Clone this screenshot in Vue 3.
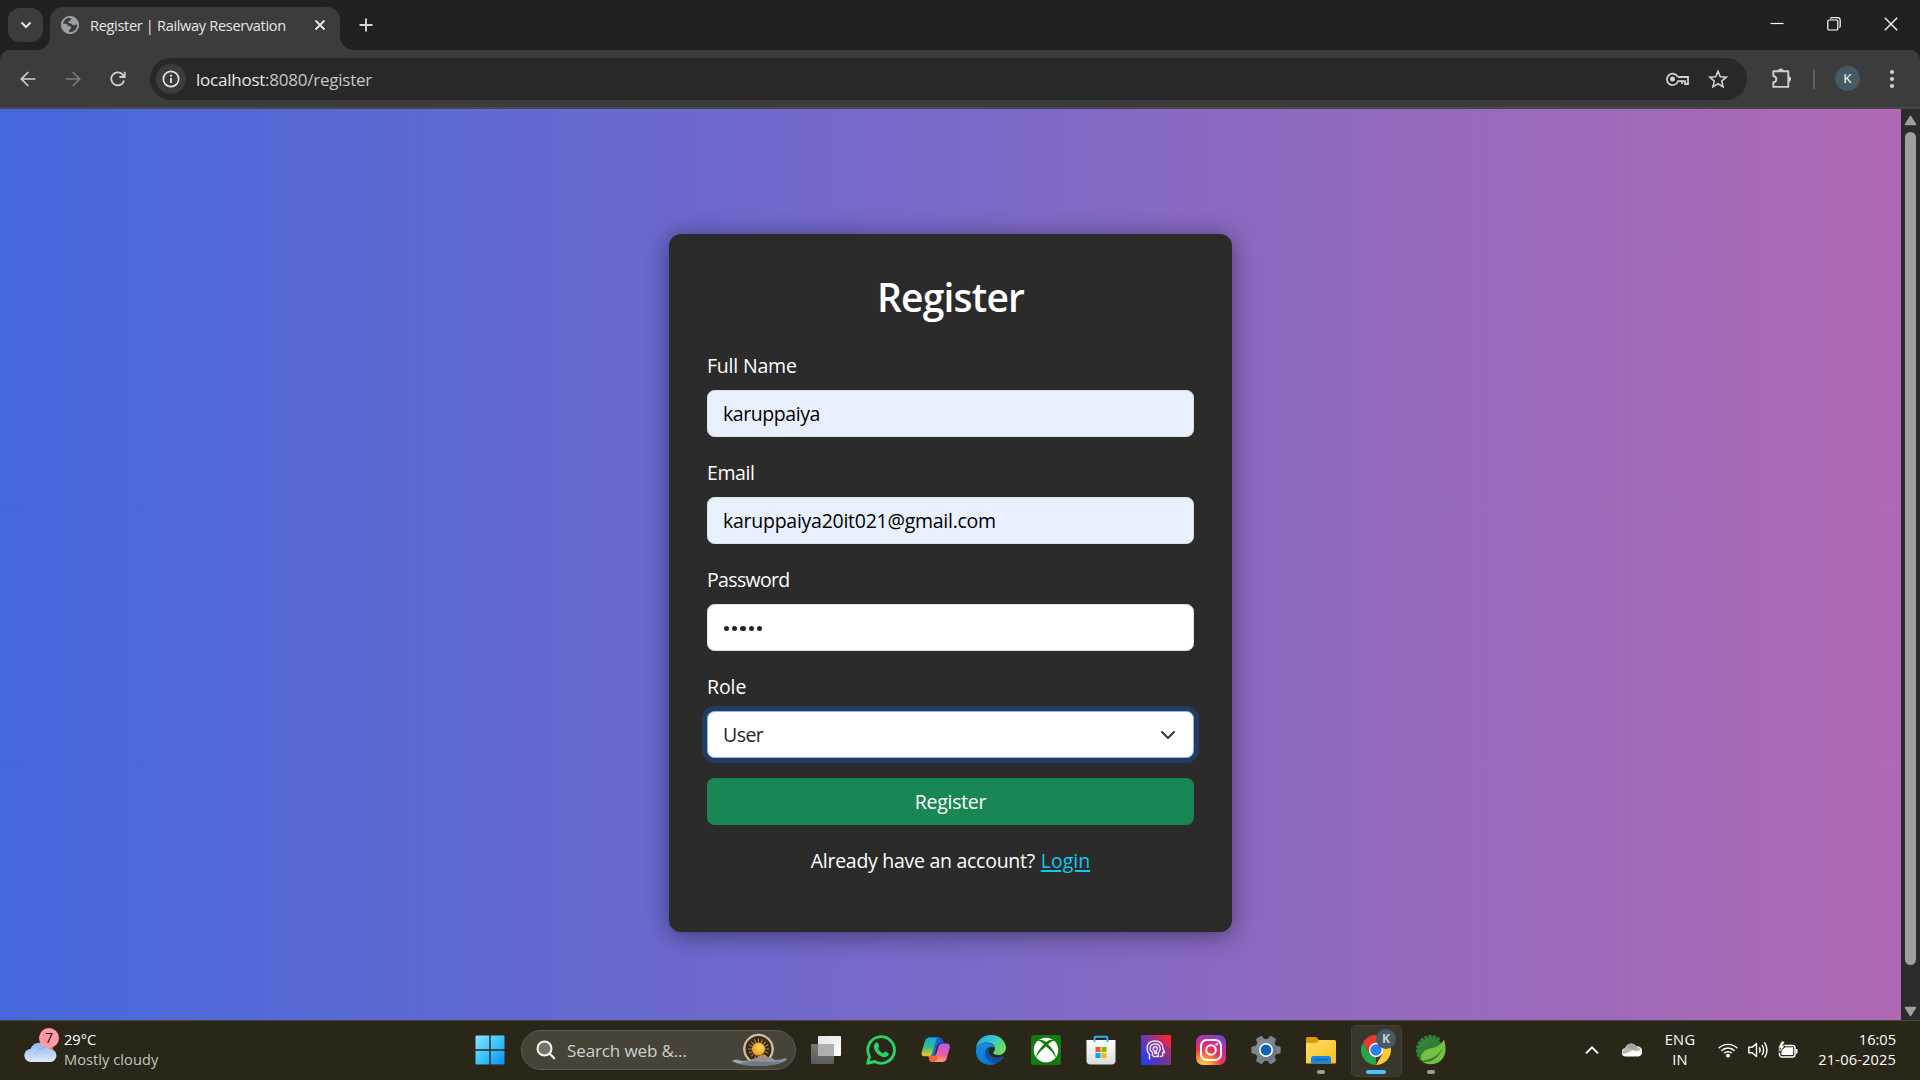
<script setup>
import { ref } from 'vue'

const name = ref('karuppaiya')
const email = ref('karuppaiya20it021@gmail.com')
const gearTeeth = [0, 60, 120, 180, 240, 300]
const leafTeeth = [150, 168, 186, 204, 222, 240, 258, 276, 294, 312]
const sunRays = Array.from({ length: 16 }, (_, i) => i * 22.5)
</script>

<template>
  <div class="screen">
    <header class="tabstrip">
      <button class="tab-search">
        <svg width="12" height="12" viewBox="0 0 12 12"><path d="M1.5 3.500 6 8l4.500-4.500" fill="none" stroke="#e3e3e3" stroke-width="2" /></svg>
      </button>
      <div class="tab">
        <svg class="globe" width="18" height="18" viewBox="0 0 18 18">
          <circle cx="9" cy="9" r="9" fill="#9aa0a6" />
          <path d="M2 7.500C2.500 4.500 5 2 8.500 1.800c1.500.2 2 1 1.500 2C9.500 5 8 4.500 7.500 5.800c-.4 1.200.8 1.700 2.200 1.600 1.500 0 1.500 1.600 2.800 1.800 1.500.2 2.500-.7 3.700-.7.300 3.500-2.200 7.200-6.400 7.800-1.600 0-2.300-.8-1.800-2 .5-1.200 2-1 2.200-2.500.1-1.500-1.300-1.500-2.500-1.900C6 9.400 6.500 7.700 4.800 7.700z" fill="#3c3c3c" />
          <circle cx="9" cy="9" r="8.200" fill="none" stroke="#9aa0a6" stroke-width="1.600" />
        </svg>
        <span class="tab-title">Register | Railway Reservation</span>
        <svg class="tab-close" width="12" height="12" viewBox="0 0 12 12"><path d="m1.500 1.500 9 9m0-9-9 9" stroke="#e8e8e8" stroke-width="1.900" /></svg>
      </div>
      <svg class="new-tab" width="14" height="14" viewBox="0 0 14 14"><path d="M7 .5v13M.5 7h13" stroke="#d5d5d5" stroke-width="1.900" /></svg>
      <div class="window-controls">
        <svg width="14" height="14" viewBox="0 0 14 14"><path d="M.5 6.500h13" stroke="#fff" stroke-width="1.200" /></svg>
        <svg width="14" height="14" viewBox="0 0 14 14"><g fill="none" stroke="#fff" stroke-width="1.200"><rect x=".8" y="3" width="10" height="10" rx="1.300" /><path d="M3.300 1.500Q3.800.7 5 .7h5.500q2.700 0 2.700 2.700V9q0 1-.8 1.500" /></g></svg>
        <svg width="14" height="14" viewBox="0 0 14 14"><path d="m.8.8 12.400 12.400m0-12.400L.8 13.200" stroke="#fff" stroke-width="1.300" /></svg>
      </div>
    </header>

    <div class="toolbar">
      <div class="nav">
        <svg width="16" height="16" viewBox="0 0 16 16"><path d="M15.500 8H1.500M8.300 1 1.300 8l7 7" fill="none" stroke="#d0d0d0" stroke-width="1.700" /></svg>
        <svg width="16" height="16" viewBox="0 0 16 16"><path d="M.5 8h14M7.700 1l7 7-7 7" fill="none" stroke="#7b7b7b" stroke-width="1.700" /></svg>
        <svg width="16" height="16" viewBox="0 0 16 16"><path d="M14 9.500A6.500 6.500 0 1 1 13.300 4.500L14.500 6M14.700.7V6H9.400" fill="none" stroke="#d0d0d0" stroke-width="1.800" /></svg>
      </div>
      <div class="omnibox">
        <span class="info">
          <svg width="18" height="18" viewBox="0 0 18 18"><circle cx="9" cy="9" r="7.700" fill="none" stroke="#e3e3e3" stroke-width="1.700" /><path d="M9 8v5M9 4.800v1.900" stroke="#e3e3e3" stroke-width="1.800" /></svg>
        </span>
        <span class="url"><b>localhost</b>:8080/register</span>
        <svg class="key" width="24" height="14" viewBox="0 0 24 14"><g fill="none" stroke="#d0d0d0" stroke-width="1.800"><path d="M12 5h10v7h-3V9.200h-3V12" /><path d="M11.800 5A5.700 5.700 0 1 0 12 9.200h4" /></g><circle cx="6.500" cy="7" r="2.500" fill="#d0d0d0" /></svg>
        <svg class="star" width="20" height="20" viewBox="0 0 20 20"><path d="m10 2.200 2.300 5.500 5.900.5-4.500 3.900 1.400 5.800-5.100-3.100-5.100 3.100 1.400-5.800-4.500-3.900 5.900-.5z" fill="none" stroke="#d0d0d0" stroke-width="1.600" /></svg>
      </div>
      <svg class="puzzle" width="22" height="22" viewBox="0 0 22 22"><path d="M2.300 3.300h15v15.600h-15v-4.400q3-.7 3-3.300t-3-3.200z" fill="none" stroke="#d0d0d0" stroke-width="1.900" stroke-linejoin="round" /><path d="M7 3.300a2.800 2.800 0 0 1 5.600 0zM17.300 8.300a2.800 2.800 0 0 1 0 5.600z" fill="#d0d0d0" /></svg>
      <i class="divider"></i>
      <span class="avatar">K</span>
      <svg class="dots" width="6" height="20" viewBox="0 0 6 20"><g fill="#d0d0d0"><circle cx="3" cy="3" r="2.100" /><circle cx="3" cy="10" r="2.100" /><circle cx="3" cy="17" r="2.100" /></g></svg>
    </div>

    <div class="viewport">
      <main class="page">
        <form class="card" @submit.prevent>
          <h2>Register</h2>
          <label class="l-name">Full Name</label>
          <div class="field filled f-name">{{ name }}</div>
          <label class="l-email">Email</label>
          <div class="field filled f-email">{{ email }}</div>
          <label class="l-pass">Password</label>
          <div class="field f-pass"><i v-for="n in 5" :key="n"></i></div>
          <label class="l-role">Role</label>
          <div class="field focus f-role">
            <span>User</span>
            <svg width="16" height="16" viewBox="0 0 16 16"><path d="m2 5 6 6 6-6" fill="none" stroke="#343a40" stroke-width="2" stroke-linecap="round" stroke-linejoin="round" /></svg>
          </div>
          <button class="submit">Register</button>
          <p class="hint"><span>Already have an account?</span><a>Login</a></p>
        </form>
      </main>
      <aside class="scrollbar">
        <svg width="13" height="11" viewBox="0 0 13 11"><path d="M6.500 1.500 11.500 9.500h-10z" fill="#9f9f9f" stroke="#9f9f9f" stroke-width="1.500" stroke-linejoin="round" /></svg>
        <i class="thumb"></i>
        <svg width="13" height="11" viewBox="0 0 13 11"><path d="M6.500 9.500 11.500 1.500h-10z" fill="#9f9f9f" stroke="#9f9f9f" stroke-width="1.500" stroke-linejoin="round" /></svg>
      </aside>
    </div>

    <footer class="taskbar">
      <div class="weather">
        <svg width="36" height="40" viewBox="0 0 36 40">
          <defs><linearGradient id="cl" x1="0" y1="0" x2="0" y2="1"><stop offset="0" stop-color="#8fb5f2" /><stop offset="1" stop-color="#dde9fb" /></linearGradient></defs>
          <path d="M20 18h9v8h-9z" fill="#f5780a" />
          <path d="M7 36a6.500 6.500 0 0 1-.5-13 9 9 0 0 1 15-3.500 6 6 0 0 1 5 3.500 6.500 6.500 0 0 1-1 13z" fill="url(#cl)" />
          <path d="M11 29q1-6 7-7 4-3 8 1" fill="none" stroke="#7fa6e8" stroke-width="1" opacity=".6" />
        </svg>
        <span class="badge">7</span>
        <div class="weather-text"><span class="temp">29°C</span><span class="sky">Mostly cloudy</span></div>
      </div>

      <div class="start">
        <svg width="30" height="30" viewBox="0 0 30 30">
          <defs><linearGradient id="win" x1="0" y1="0" x2="1" y2="1"><stop offset="0" stop-color="#8fe3ff" /><stop offset=".5" stop-color="#3cc4fb" /><stop offset="1" stop-color="#0a8ff8" /></linearGradient></defs>
          <path d="M.5 1.500A1 1 0 0 1 1.500.5h12.800v13.800H.5zM15.700.5h12.800a1 1 0 0 1 1 1v12.800H15.700zM.5 15.700h13.800v13.800H1.500a1 1 0 0 1-1-1zM15.700 15.700h13.800v12.800a1 1 0 0 1-1 1H15.700z" fill="url(#win)" />
        </svg>
      </div>

      <div class="search">
        <svg width="20" height="20" viewBox="0 0 20 20"><circle cx="8.500" cy="8.500" r="7" fill="#77756b" stroke="#f5f5f5" stroke-width="2" /><path d="m13.500 13.500 4.700 4.700" stroke="#f5f5f5" stroke-width="2.300" stroke-linecap="round" /></svg>
        <span>Search web &amp;...</span>
        <svg class="sunrise" width="56" height="34" viewBox="0 0 56 34">
          <defs>
            <radialGradient id="sun" cx=".6" cy=".4"><stop offset="0" stop-color="#ffe27a" /><stop offset="1" stop-color="#f6a31c" /></radialGradient>
            <linearGradient id="hill" x1="0" x2="1"><stop offset="0" stop-color="#8faec0" /><stop offset=".5" stop-color="#a08f80" /><stop offset="1" stop-color="#7597b0" /></linearGradient>
          </defs>
          <circle cx="27.500" cy="16" r="14" fill="#352b20" stroke="#e9b888" stroke-width="2" />
          <circle cx="27.500" cy="16" r="15" fill="none" stroke="#abcbe0" stroke-width=".8" />
          <path v-for="a in sunRays" :key="a" d="M27.500 5.500v4" stroke="#b98528" stroke-width="1" :transform="`rotate(${a} 27.500 16)`" />
          <circle cx="27.500" cy="16" r="6.500" fill="url(#sun)" />
          <path d="M1 28q4-3 10 0 6 0 11-2 4-1 8-4 4-1 7 2 4 0 7 3 6 0 11-2 2 2-3 4-8 4-24 4-19 0-27-5z" fill="url(#hill)" />
          <path d="M8 31q12-5 24-2 10 1 18-1-6 5-23 5-12 0-19-2z" fill="#577087" opacity=".7" />
        </svg>
      </div>

      <nav class="apps">
        <span class="app"><svg viewBox="0 0 30 30">
          <defs><linearGradient id="tv1" x1="0" y1="0" x2="1" y2="1"><stop offset="0" stop-color="#e4e4e4" /><stop offset="1" stop-color="#fff" /></linearGradient><linearGradient id="tv2" x1="0" y1="0" x2="0" y2="1"><stop offset="0" stop-color="#777" /><stop offset="1" stop-color="#5c5c5c" /></linearGradient></defs>
          <rect x="0" y="9" width="23" height="20" rx="1" fill="url(#tv2)" /><rect x="7" y="1" width="23" height="20" rx="1" fill="url(#tv1)" /><path d="M7 9h16v12H8a1 1 0 0 1-1-1z" fill="#afafaf" />
        </svg></span>
        <span class="app"><svg viewBox="0 0 30 30">
          <path d="M1.700 28.300 3.500 21.400A13.300 13.300 0 1 1 8.500 26.500z" fill="none" stroke="#25d366" stroke-width="2.900" stroke-linejoin="round" />
          <path d="M9.700 7.700c.8-.6 1.900-.5 2.300.3l1.200 2.900c.3.700-1.200 1.900-1.300 2.400.9 2.200 2.900 4.100 5.300 5 .7-.1 1.500-2 2.300-1.800l2.800 1.400c.8.4.3 2.300-.6 3.200-1.300 1.200-3.300 1.400-5 .8-4.400-1.500-7.300-4.600-8.500-8.200-.7-2.200-.2-4.700 1.500-6z" fill="#25d366" />
        </svg></span>
        <span class="app"><svg viewBox="0 0 30 30">
          <defs>
            <linearGradient id="cp1" x1="0" y1="0" x2="0" y2="1"><stop offset="0" stop-color="#12a7ee" /><stop offset=".5" stop-color="#39bd83" /><stop offset="1" stop-color="#f4c81c" /></linearGradient>
            <linearGradient id="cp2" x1=".4" y1="0" x2=".3" y2="1"><stop offset="0" stop-color="#b15cf0" /><stop offset=".55" stop-color="#ed5c9b" /><stop offset="1" stop-color="#ffa06b" /></linearGradient>
            <linearGradient id="cp3" x1="0" y1="0" x2="1" y2="0"><stop offset="0" stop-color="#1c7ee8" /><stop offset="1" stop-color="#1e46c4" /></linearGradient>
          </defs>
          <path d="M7 2.500h12q2 0 2.800 2.500l1.200 3.500h-4q-2.200 0-3.100 3l-2.700 10q-.8 2-3.200 2z" fill="url(#cp3)" />
          <path d="M22.500 8.500h2.800q4.500 0 3.400 4.500l-3 10.500Q24.600 27 21 27H11.500q-2.500 0-3.200-2.500L7.700 21.300H12q2.500 0 3.200-2.500l2.300-7.600q.9-2.700 5-2.700z" fill="url(#cp2)" />
          <path d="M7.500 21.300H12q2.500 0 3-2l1.500 5-2.500 2.700h-2.500q-2.500 0-3.200-2.500z" fill="#f4622e" />
          <path d="M8.500 2.500h9q-1.900.8-2.700 3.500l-4 13.300q-.7 2-2.800 2H4q-4.400 0-3.200-4.600L4 6q1-3.500 4.500-3.500z" fill="url(#cp1)" />
        </svg></span>
        <span class="app"><svg viewBox="0 0 30 30">
          <defs>
            <linearGradient id="ed1" x1="0" y1=".2" x2="1" y2=".6"><stop offset="0" stop-color="#27a6e8" /><stop offset=".5" stop-color="#36c6cf" /><stop offset="1" stop-color="#72e04c" /></linearGradient>
            <linearGradient id="ed2" x1="0" y1="0" x2=".3" y2="1"><stop offset="0" stop-color="#1590dc" /><stop offset="1" stop-color="#0a76d6" /></linearGradient>
          </defs>
          <path d="M0 14C.5 6 6.500 0 15 0c9 0 15 6.500 15 12.500 0 4.500-3.300 7.500-7.500 7.500-3.500 0-5.700-1.200-5.200-2.500.4-1 1.700-1.500 1.700-3.800C19 9.500 14.500 7.500 10 7.500 5 7.500 1.500 10.500 0 14z" fill="url(#ed1)" />
          <path d="M0 15.500C.5 10.500 4.500 8 9.500 8c4.300 0 8.800 1.600 9.400 5-3.700-3-8.100.4-7.600 5.500.7 6 5.500 9.500 10 9-2 1.600-4.200 2.500-6.800 2.500C6 30-.7 23.500 0 15.500z" fill="url(#ed2)" />
          <path d="M14.500 11.700c-3.700.2-5.900 3.300-5.300 7.300C10 25 15 29 20.500 28c3.200-1 5.800-3 7.200-5.600.5-1-.4-1.200-1.200-.8-4.400 2-9.700 1.200-12.300-1.900-2.500-2.800-1.900-6 .3-8z" fill="#144f9e" />
        </svg></span>
        <span class="app"><svg viewBox="0 0 30 30">
          <rect width="30" height="30" rx="3" fill="#107c10" /><circle cx="15" cy="15" r="12.300" fill="#fff" />
          <path d="M6.500 5.500Q10 3.500 15 7q5-3.500 8.500-1.500-3 .3-6.500 3.700 6.500 6 8.500 14-4-7-10.500-12-6.500 5-10.500 12 2-8 8.500-14-3.500-3.400-6.500-3.700z" fill="#107c10" />
        </svg></span>
        <span class="app"><svg viewBox="0 0 30 30">
          <defs><linearGradient id="st" x1="0" y1="0" x2="0" y2="1"><stop offset="0" stop-color="#fff" /><stop offset="1" stop-color="#dcdcdc" /></linearGradient></defs>
          <path d="M.5 5h29v20.500a4 4 0 0 1-4 4h-21a4 4 0 0 1-4-4z" fill="url(#st)" />
          <path d="M8.500 7V3q0-1.200 1.200-1.200h10.600q1.200 0 1.200 1.200v4" fill="none" stroke="#28b4ee" stroke-width="1.900" />
          <path d="M9.500 12h5v5h-5z" fill="#f25022" /><path d="M15.500 12h5v5h-5z" fill="#7fba00" /><path d="M9.500 18h5v5h-5z" fill="#00a4ef" /><path d="M15.500 18h5v5h-5z" fill="#ffb900" />
        </svg></span>
        <span class="app"><svg viewBox="0 0 30 30">
          <defs><linearGradient id="hd" x1="0" y1=".9" x2="1" y2=".2"><stop offset="0" stop-color="#1740f5" /><stop offset=".5" stop-color="#7638a8" /><stop offset="1" stop-color="#fb2432" /></linearGradient></defs>
          <path d="M0 0h30v30H0z" fill="url(#hd)" /><path d="m8 23 8 7h14V15l-7-6z" fill="#4a359c" opacity=".35" />
          <g fill="none" stroke="#e9ddfa" stroke-width="1.500"><path d="M8.500 24.500v-5Q6 17 6 13.500 6.500 6 14 6q7.500 0 8 7.500l1.500 4h-1.800v2.800q0 1.200-3 1.200" /><path d="M11.500 21v-3.300Q9 16 9 13.300 9.500 9 14.200 9t5 4.500q0 3-2 4.500v3.500h-5.500" /><path d="M14 18.500v-2q-1.800-1-1.800-2.700 0-2 2-2t2 2q0 1.400-1 2.200V18.500z" /></g>
        </svg></span>
        <span class="app"><svg viewBox="0 0 30 30">
          <defs><radialGradient id="ig" cx=".25" cy="1.050" r="1.150"><stop offset="0" stop-color="#ffd44f" /><stop offset=".25" stop-color="#fd9a3a" /><stop offset=".5" stop-color="#f0374b" /><stop offset=".75" stop-color="#cc2c95" /><stop offset="1" stop-color="#6b4bd3" /></radialGradient></defs>
          <rect width="30" height="30" rx="7" fill="url(#ig)" /><g fill="none" stroke="#fff" stroke-width="2"><rect x="5" y="5" width="20" height="20" rx="5.800" /><circle cx="15" cy="15" r="4.800" /></g><circle cx="20.700" cy="9.300" r="1.300" fill="#fff" />
        </svg></span>
        <span class="app"><svg viewBox="0 0 30 30">
          <defs><linearGradient id="gr" x1="0" y1="0" x2="1" y2="1"><stop offset="0" stop-color="#89959e" /><stop offset="1" stop-color="#626e7a" /></linearGradient></defs>
          <path v-for="a in gearTeeth" :key="a" d="M10.300 7 11.600 1.200Q11.800.3 12.700.3h4.600q.9 0 1.100.9L19.700 7z" :transform="`rotate(${a + 30} 15 15)`" fill="#78848e" />
          <circle cx="15" cy="15" r="11" fill="url(#gr)" /><circle cx="15" cy="15" r="7" fill="#fff" /><circle cx="15" cy="15" r="5.400" fill="#0f63b5" />
        </svg></span>
        <span class="app running"><svg viewBox="0 0 30 30">
          <defs><linearGradient id="fo" x1="0" y1="0" x2="1" y2="1"><stop offset="0" stop-color="#ffe06a" /><stop offset="1" stop-color="#f9bd18" /></linearGradient></defs>
          <path d="M0 3.500Q0 2 1.500 2h7.700q1 0 1.700.8L13 5v4H0z" fill="#dc9a09" /><path d="M0 8h9.500q1 0 1.700-.8L13 5h15.500Q30 5 30 6.500v21q0 1-1 1H1q-1 0-1-1z" fill="url(#fo)" />
          <path d="M5 28.500v-5Q5 21 7.500 21h15q2.500 0 2.500 2.500v5z" fill="#1a86dc" /><path d="M8.500 24.800h13" stroke="#0d5ca8" stroke-width="1.200" />
        </svg></span>
        <span class="app active"><svg viewBox="0 0 30 30">
          <path d="M15 15 15 30A15 15 0 0 1 2 7.500L8.500 18.700z" fill="#2ba24c" /><path d="M15 15V8h13.300A15 15 0 0 1 15 30l6.500-11.200z" fill="#fcc934" /><path d="M2 7.500 8.500 18.700 15 15V8h13.300l-.3-.5A15 15 0 0 0 2 7.500z" fill="#e33b2e" />
          <circle cx="15" cy="15" r="7.200" fill="#fff" /><circle cx="15" cy="15" r="5.700" fill="#2d7df0" />
        </svg><b class="profile">K</b></span>
        <span class="app running"><svg viewBox="0 0 30 30">
          <defs><linearGradient id="sp" x1="0" y1="0" x2="1" y2="1"><stop offset="0" stop-color="#3a8a3c" /><stop offset="1" stop-color="#206b35" /></linearGradient></defs>
          <path v-for="a in leafTeeth" :key="a" d="M13.300 26h3.400v4h-3.400z" :transform="`rotate(${a - 100} 15 15)`" fill="#338238" />
          <circle cx="15" cy="16" r="13" fill="url(#sp)" />
          <path d="M28 4.500c2.300 8 3 17-5 22.500-4 2.500-11 3.200-16 0C4 24.500 4.500 18.500 9 15.500c4-2.500 8-2 12.500-4.500 3-1.500 5-3.500 6.500-6.500z" fill="#77bf43" />
          <path d="M6.500 25.500c9-.8 15.500-5 19.500-11.500-3 8.500-10 13.500-18 13z" fill="#2f7d37" />
        </svg></span>
      </nav>

      <div class="tray">
        <svg class="chev" width="14" height="10" viewBox="0 0 14 10"><path d="m1 8.300 6-6 6 6" fill="none" stroke="#fff" stroke-width="1.800" /></svg>
        <svg class="cloud" width="20" height="14" viewBox="0 0 20 14"><path d="M4 13.500A4 4 0 0 1 3.300 5 6 6 0 0 1 14 3.500 5 5 0 0 1 16.500 13.500z" fill="#fff" /><path d="M3.300 5A6 6 0 0 1 14.300 3.500L15 5 7 9 1 11.500Q-1 6.500 3.300 5z" fill="#b8b7b1" /><path d="m5 4 9 4.500 5-1.500Q18 4 15 4A6 6 0 0 0 5 3z" fill="#9d9b92" opacity=".7" /></svg>
        <div class="lang"><span class="eng">ENG</span><span class="in">IN</span></div>
        <svg class="wifi" width="20" height="16" viewBox="0 0 20 16"><g fill="none" stroke="#fff" stroke-width="1.400"><path d="M.7 6.200a13.200 13.200 0 0 1 18.600 0M3.400 8.800a9.300 9.300 0 0 1 13.200 0M6.200 11.300a5.400 5.400 0 0 1 7.600 0" /></g><circle cx="10" cy="13.700" r="1.900" fill="#fff" /></svg>
        <svg class="vol" width="20" height="18" viewBox="0 0 20 18"><g fill="none" stroke="#fff" stroke-width="1.400"><path d="M.8 6.300h3.400L8.500 2.500v13L4.200 11.700H.8z" stroke-linejoin="round" /><path d="M11.300 6.300q1.700 2.700 0 5.400M14 3.800q3.300 5.200 0 10.400" /><path d="M16.500 1.300q5 7.700 0 15.400" /></g></svg>
        <svg class="bat" width="20" height="18" viewBox="0 0 20 18"><rect x="1.500" y="4.500" width="15.500" height="11.500" rx="2.500" fill="none" stroke="#fff" stroke-width="1.400" /><path d="M3.500 14V9l4-2.800h7.700V14z" fill="#fff" /><path d="M18.500 8v4.500" stroke="#fff" stroke-width="2" /><path d="M3.500 0 0 7h2.500L1 12l6-7H4.500L7 .5z" fill="#fff" stroke="#2a2718" stroke-width=".7" /></svg>
        <div class="clock"><span class="time">16:05</span><span class="date">21-06-2025</span></div>
      </div>
    </footer>
  </div>
</template>

<style>
body { background: #2a2718; overflow: hidden; }
</style>

<style scoped>
* { box-sizing: border-box; }
svg { display: block; flex: none; }
.screen {
  width: 1920px; height: 1080px; display: flex; flex-direction: column; overflow: hidden;
  font-family: "Open Sans", "Noto Sans", sans-serif; color: #fff; background: #202221;
}
button { border: 0; font: inherit; color: inherit; padding: 0; }

/* tab strip */
.tabstrip { height: 50px; flex: none; display: flex; align-items: flex-start; padding-left: 8px; }
.tab-search { width: 35px; height: 34px; margin-top: 8px; border-radius: 12px; background: #3c3c3c; display: grid; place-items: center; }
.tab { position: relative; width: 290px; height: 43px; margin: 7px 0 0 7px; padding-left: 11px; border-radius: 13px 13px 0 0; background: #3c3c3c; display: flex; align-items: flex-start; }
.tab::before, .tab::after { content: ""; position: absolute; bottom: 0; width: 13px; height: 13px; }
.tab::before { left: -13px; background: radial-gradient(circle at 0 0, transparent 12.500px, #3c3c3c 13px); }
.tab::after { right: -13px; background: radial-gradient(circle at 100% 0, transparent 12.500px, #3c3c3c 13px); }
.globe { margin-top: 9px; }
.tab-title { margin: 8px 0 0 11px; width: 214px; font-size: 14.600px; line-height: 20px; letter-spacing: -.34px; white-space: nowrap; color: #e6e6e6; }
.tab-close { margin: 12px 0 0 10px; }
.new-tab { margin: 18px 0 0 19px; }
.window-controls { margin: 17px 22px 0 auto; display: flex; gap: 43px; }

/* toolbar */
.toolbar { height: 59px; flex: none; display: flex; align-items: center; padding: 0 16px 0 20px; background: #3c3c3c; border-bottom: 2px solid #484848; border-radius: 10px 10px 0 0; }
.nav { display: flex; gap: 29px; width: 130px; }
.omnibox { width: 1597px; height: 42px; margin-top: 1px; border-radius: 21px; background: #282828; display: flex; align-items: center; padding: 0 19px 0 6px; }
.info { width: 30px; height: 30px; border-radius: 50%; background: #3c3c3c; display: grid; place-items: center; }
.url { margin: 1px 0 0 10px; font-size: 17.060px; letter-spacing: -.26px; line-height: 24px; color: #c7c7c7; }
.url b { font-weight: 400; color: #e6e6e6; }
.key { margin-left: auto; }
.star { margin-left: 18px; }
.puzzle { margin-left: 24px; }
.divider { width: 2px; height: 20px; background: #5f5f5f; margin-left: 20px; }
.avatar { width: 25px; height: 25px; border-radius: 50%; background: #455a64; margin-left: 20px; text-align: center; font-size: 13.500px; line-height: 25px; }
.dots { margin-left: auto; margin-right: 9px; }

/* page */
.viewport { height: 911px; flex: none; display: flex; }
.page { width: 1901px; padding-top: 125px; background: linear-gradient(to right, #4568dc, #b06ab3); }
.card { width: 563px; height: 698px; margin: 0 auto; padding: 39px 38px 0; background: #2b2b2b; border-radius: 12px; box-shadow: 0 3px 25px rgba(0, 0, 0, .45); display: flex; flex-direction: column; font-size: 19.500px; }
h2 { margin: 0 0 30px; font-size: 39px; line-height: 48px; font-weight: 600; letter-spacing: -.8px; text-align: center; }
label { height: 30px; line-height: 30px; margin-bottom: 9px; }
.field { height: 47px; flex: none; margin-bottom: 21px; padding: 0 15px; border: 1px solid #dee2e6; border-radius: 7.500px; background: #fff; color: #212529; line-height: 45px; display: flex; align-items: center; }
.filled { background: #e8f0fe; color: #000; }
.focus { border-color: #86b7fe; box-shadow: 0 0 0 5px rgba(13, 110, 253, .25); justify-content: space-between; padding-right: 17px; margin-bottom: 20px; }
.l-name { letter-spacing: -.2px; }
.f-name { letter-spacing: -.43px; }
.l-email { letter-spacing: -.41px; }
.f-email { letter-spacing: -.26px; }
.l-pass { letter-spacing: -.66px; }
.l-role { letter-spacing: -.1px; }
.f-role { letter-spacing: -.55px; }
.f-pass { gap: 3px; padding-left: 16px; padding-top: 2px; }
.f-pass i { width: 5.200px; height: 5.200px; border-radius: 50%; background: #212529; }
.submit { height: 47px; flex: none; border-radius: 7.500px; background: #198754; letter-spacing: -.28px; line-height: 48px; }
.hint { display: flex; justify-content: center; gap: 6px; margin: 21px 0 0; line-height: 30px; letter-spacing: -.28px; }
.hint a { color: #0dcaf0; letter-spacing: 0; text-decoration: underline; text-decoration-thickness: 1.500px; text-underline-offset: 2px; }
.scrollbar { width: 19px; background: #2c2c2c; display: flex; flex-direction: column; align-items: center; padding: 6px 0 3px; }
.thumb { width: 11px; height: 833px; margin: 6px 0 auto; border-radius: 6px; background: #9f9f9f; }

/* taskbar */
.taskbar { height: 60px; flex: none; display: flex; align-items: center; background: #2a2718; border-top: 1px solid #4d4a3f; padding-bottom: 1px; }
.weather { position: relative; width: 450px; height: 58px; padding-left: 24px; display: flex; }
.weather svg { margin-top: 5px; }
.badge { position: absolute; left: 39px; top: 7px; width: 20px; height: 20px; border-radius: 50%; background: #ff99a4; color: #111; text-align: center; font-size: 14px; line-height: 20px; }
.weather-text { margin-left: 4px; padding-top: 8px; display: flex; flex-direction: column; font-size: 14.600px; line-height: 20px; }
.sky { color: #c5c4bf; letter-spacing: .06px; }
.start { margin-left: 25px; width: 46px; }
.search { width: 275px; height: 40px; border-radius: 20px; background: #474437; border: 1px solid #5e5b50; display: flex; align-items: center; padding: 0 8px 0 14px; }
.search span { margin-left: 11px; font-size: 17.060px; letter-spacing: -.14px; color: #d0cfcb; white-space: nowrap; }
.sunrise { margin-left: auto; }
.apps { display: flex; margin-left: 2px; }
.app { position: relative; width: 55px; height: 58px; display: grid; place-items: center; }
.app svg { width: 30px; height: 30px; position: relative; }
.running::after, .active::after { content: ""; position: absolute; bottom: 5px; left: 24px; width: 8px; height: 4px; border-radius: 2px; background: #9d9b94; }
.active::after { left: 18px; width: 20px; background: #4cc2ff; }
.active::before { content: ""; position: absolute; left: 3px; top: 4px; width: 49px; height: 50px; border-radius: 5px; background: #39362a; border: 1px solid #434036; }
.profile { position: absolute; left: 28px; top: 8px; width: 20px; height: 20px; border-radius: 50%; background: #455a64; color: #c9d0d4; font-size: 12px; line-height: 20px; text-align: center; }
.tray { display: flex; align-items: center; margin-left: auto; padding-right: 24px; font-size: 14.600px; line-height: 20px; }
.cloud { margin-left: 23px; }
.lang { margin: -3px 0 0 22px; width: 32px; display: flex; flex-direction: column; align-items: center; }
.eng { letter-spacing: .3px; }
.in { letter-spacing: .3px; }
.wifi { margin-left: 22px; }
.vol { margin-left: 10px; }
.bat { margin-left: 10px; }
.clock { margin: -3px 0 0 20px; width: 78px; display: flex; flex-direction: column; align-items: flex-end; white-space: nowrap; }
.date { letter-spacing: .15px; }
</style>
